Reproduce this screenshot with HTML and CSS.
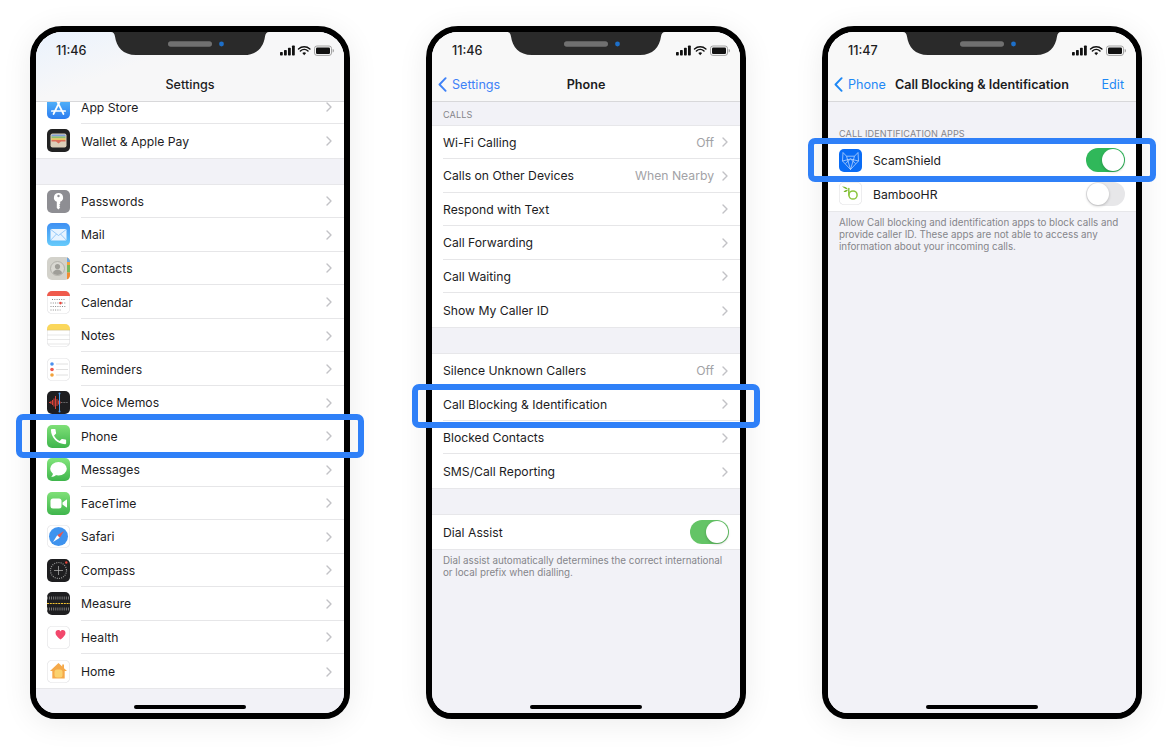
FILE: index.html
```html
<!DOCTYPE html>
<html lang="en">
<head>
<meta charset="utf-8">
<title>Call blocking setup</title>
<link rel="stylesheet" href="styles.css">
</head>
<body>
<svg class="symbols" aria-hidden="true">
  <symbol id="chev" viewBox="0 0 6 10"><path d="M1 1l4 4-4 4" fill="none" stroke="currentColor" stroke-width="1.4" stroke-linecap="round" stroke-linejoin="round"/></symbol>
  <symbol id="back" viewBox="0 0 9 15"><path d="M7.6 1.2L1.5 7.5l6.1 6.3" fill="none" stroke="currentColor" stroke-width="1.9" stroke-linecap="round" stroke-linejoin="round"/></symbol>
  <symbol id="notch" viewBox="0 0 158 23"><path d="M0 0h158c-2.5 0-3.4 1.6-4 4.5C152.600 15 146 23 133 23H25C12 23 5.400 15 4 4.500 3.400 1.600 2.500 0 0 0z" fill="#2a2a2a"/><rect x="57" y="9.300" width="44" height="5.400" rx="2.700" fill="#707070"/><circle cx="110.500" cy="12" r="2.400" fill="#1d6fc9"/></symbol>
  <symbol id="status" viewBox="0 0 54 11">
    <rect x="0" y="7" width="2.800" height="3.500" rx=".7" fill="#111"/><rect x="4" y="5" width="2.800" height="5.500" rx=".7" fill="#111"/><rect x="8" y="2.800" width="2.800" height="7.700" rx=".7" fill="#111"/><rect x="12" y=".5" width="2.800" height="10" rx=".7" fill="#111"/>
    <path d="M18.500 4a8.600 8.600 0 0 1 11.400 0M20.400 6a5.700 5.700 0 0 1 7.600 0" fill="none" stroke="#111" stroke-width="1.500" stroke-linecap="round"/><path d="M22.300 8l1.900 2.200L26.100 8a3 3 0 0 0-3.800 0z" fill="#111"/>
    <rect x="34.500" y="1" width="17" height="9.400" rx="2.400" fill="none" stroke="#9a9a9a" stroke-width=".9"/><rect x="36" y="2.400" width="14" height="6.600" rx="1.300" fill="#111"/><path d="M52.700 4v3.400c.8-.2 1.200-.9 1.200-1.700s-.4-1.500-1.200-1.700z" fill="#9a9a9a"/>
  </symbol>
</svg>

<main class="stage">

  <section class="phone">
    <svg class="notch"><use href="#notch"/></svg>
    <div class="screen">
      <header class="bar bar-tinted">
        <div class="status"><span class="time">11:46</span><svg class="status-icons"><use href="#status"/></svg></div>
        <div class="nav"><span></span><span class="nav-title nav-title-medium">Settings</span><span></span></div>
      </header>
      <div class="content content-scrolled">
        <div class="group">
          <div class="row"><span class="icon icon-appstore"><svg viewBox="0 0 23 23"><path d="M13.500 4L6.500 18M9.500 4l7 14M4.800 15h13.400" fill="none" stroke="#fff" stroke-width="1.700" stroke-linecap="round"/></svg></span><div class="row-body"><span>App Store</span><svg class="chev"><use href="#chev"/></svg></div></div>
          <div class="row"><span class="icon icon-wallet"><svg viewBox="0 0 23 23"><rect x="3.500" y="4.500" width="16" height="14" rx="2" fill="#dccfb8"/><rect x="4.500" y="5.500" width="14" height="2" fill="#7f9fd8"/><rect x="4.500" y="7.500" width="14" height="1.800" fill="#8cc06f"/><rect x="4.500" y="9.300" width="14" height="1.800" fill="#e8c45f"/><path d="M4.500 11.100h14v1.500h-4.500l-2.500 2-2.500-2H4.500z" fill="#dc6f5a"/></svg></span><div class="row-body"><span>Wallet &amp; Apple Pay</span><svg class="chev"><use href="#chev"/></svg></div></div>
        </div>
        <div class="group group-gap">
          <div class="row"><span class="icon icon-passwords"><svg viewBox="0 0 23 23"><path fill-rule="evenodd" d="M11.500 3a4.500 4.500 0 0 1 1.700 8.700v2l-1 1 1 1-1 1 1 .9-1.700 1.900-1.700-1.500v-6.300A4.500 4.500 0 0 1 11.500 3zm0 1.800a1.200 1.200 0 1 0 0 2.400 1.200 1.200 0 0 0 0-2.400z" fill="#fff"/></svg></span><div class="row-body"><span>Passwords</span><svg class="chev"><use href="#chev"/></svg></div></div>
          <div class="row"><span class="icon icon-mail"><svg viewBox="0 0 23 23"><rect x="3.500" y="6" width="16" height="11.500" rx="1.200" fill="#e8f4ff"/><path d="M3.800 6.500l7.700 6 7.700-6M3.800 17l5.700-6M19.200 17l-5.700-6" fill="none" stroke="#72b8f5" stroke-width=".7"/></svg></span><div class="row-body"><span>Mail</span><svg class="chev"><use href="#chev"/></svg></div></div>
          <div class="row"><span class="icon icon-contacts"><svg viewBox="0 0 23 23"><rect x="20" y="0" width="3" height="8" fill="#f0a33a"/><rect x="20" y="8" width="3" height="7.500" fill="#77b85c"/><rect x="20" y="15.500" width="3" height="7.500" fill="#f28a30"/><rect x="20" y="0" width="3" height="5" fill="#6aa6e8"/><circle cx="10.500" cy="11.500" r="7" fill="#d9d8d2" stroke="#a9a8a2" stroke-width=".8"/><circle cx="10.500" cy="9.500" r="2.600" fill="#9f9e98"/><path d="M5.800 16.200c.8-2.500 2.600-3.700 4.700-3.700s3.900 1.200 4.700 3.700a7 7 0 0 1-9.400 0z" fill="#9f9e98"/></svg></span><div class="row-body"><span>Contacts</span><svg class="chev"><use href="#chev"/></svg></div></div>
          <div class="row"><span class="icon icon-white"><svg viewBox="0 0 23 23"><rect width="23" height="5" fill="#ef5a4c"/><path d="M5 8.500h13M3.500 12h16M3.500 15.500h16M3.500 19h10" stroke="#8a8a8a" stroke-width="1" stroke-dasharray="1 1.300"/><rect x="12.200" y="10.800" width="2.600" height="2.600" rx="1.300" fill="#e8453a"/></svg></span><div class="row-body"><span>Calendar</span><svg class="chev"><use href="#chev"/></svg></div></div>
          <div class="row"><span class="icon icon-white"><svg viewBox="0 0 23 23"><rect width="23" height="6" fill="#fbd75b"/><path d="M0 6.200h23" stroke="#c9b777" stroke-width=".5"/><path d="M0 11h23M0 15.500h23M0 20h23" stroke="#dcdcdc" stroke-width=".7"/></svg></span><div class="row-body"><span>Notes</span><svg class="chev"><use href="#chev"/></svg></div></div>
          <div class="row"><span class="icon icon-white"><svg viewBox="0 0 23 23"><circle cx="5" cy="6" r="1.800" fill="#4a90ee"/><circle cx="5" cy="11.500" r="1.800" fill="#ee5a50"/><circle cx="5" cy="17" r="1.800" fill="#f2a33c"/><path d="M9 6h12M9 11.500h12M9 17h12" stroke="#d8d8d8" stroke-width=".8"/></svg></span><div class="row-body"><span>Reminders</span><svg class="chev"><use href="#chev"/></svg></div></div>
          <div class="row"><span class="icon icon-dark"><svg viewBox="0 0 23 23"><path d="M2 11.500h2M4 10v3M5.500 9v5M7 7.500v8M8.500 5v13M10 8v7M11.500 9.500v4M13 10.500v2" stroke="#d8423a" stroke-width="1"/><path d="M14 11.500h7" stroke="#aaa" stroke-width=".6" stroke-dasharray="1 .6"/><path d="M12.500 2v19" stroke="#4a9bef" stroke-width="1"/><circle cx="12.500" cy="2.500" r="1" fill="#4a9bef"/><circle cx="12.500" cy="20.500" r="1" fill="#4a9bef"/></svg></span><div class="row-body"><span>Voice Memos</span><svg class="chev"><use href="#chev"/></svg></div></div>
          <div class="row"><span class="icon icon-phone"><svg viewBox="0 0 24 24"><path transform="translate(1.500 1.500) scale(.88)" d="M6.620 10.790c1.440 2.830 3.760 5.140 6.590 6.590l2.200-2.200c.27-.27.67-.36 1.020-.24 1.120.37 2.330.57 3.570.57.550 0 1 .45 1 1V20c0 .55-.45 1-1 1-9.390 0-17-7.610-17-17 0-.55.45-1 1-1h3.500c.55 0 1 .45 1 1 0 1.250.2 2.450.57 3.570.11.350.03.740-.25 1.020l-2.200 2.200z" fill="#fff"/></svg></span><div class="row-body"><span>Phone</span><svg class="chev"><use href="#chev"/></svg></div></div>
          <div class="row"><span class="icon icon-messages"><svg viewBox="0 0 23 23"><ellipse cx="11.500" cy="10.800" rx="8.300" ry="6.800" fill="#fff"/><path d="M6 15c0 1.800-.8 3-1.800 3.800 2 .1 4-.6 5.300-2z" fill="#fff"/></svg></span><div class="row-body"><span>Messages</span><svg class="chev"><use href="#chev"/></svg></div></div>
          <div class="row"><span class="icon icon-facetime"><svg viewBox="0 0 23 23"><rect x="3.500" y="6.500" width="11" height="10" rx="2.500" fill="#fff"/><path d="M15.500 10.500l3.700-2.800c.4-.3.8 0 .8.400v6.800c0 .5-.4.7-.8.400l-3.700-2.800z" fill="#fff"/></svg></span><div class="row-body"><span>FaceTime</span><svg class="chev"><use href="#chev"/></svg></div></div>
          <div class="row"><span class="icon icon-safari"><svg viewBox="0 0 23 23"><circle cx="11.500" cy="11.500" r="9.500" fill="#3f93ee"/><path d="M17 6l-6.800 4.200 2.600 2.600z" fill="#e9574c"/><path d="M6 17l4.200-6.800 2.600 2.600z" fill="#fff"/></svg></span><div class="row-body"><span>Safari</span><svg class="chev"><use href="#chev"/></svg></div></div>
          <div class="row"><span class="icon icon-dark"><svg viewBox="0 0 23 23"><circle cx="11.500" cy="11.500" r="8" fill="none" stroke="#9a9a9a" stroke-width="1.200" stroke-dasharray="1 1.200"/><path d="M11.500 7v9M7 11.500h9" stroke="#bbb" stroke-width=".7"/><circle cx="19.300" cy="3.500" r="1.200" fill="#e8453a"/></svg></span><div class="row-body"><span>Compass</span><svg class="chev"><use href="#chev"/></svg></div></div>
          <div class="row"><span class="icon icon-dark"><svg viewBox="0 0 23 23"><path d="M0 6h23M0 17h23" stroke="#8d8d8d" stroke-width="3" stroke-dasharray=".8 1.300"/><path d="M0 11.500h23" stroke="#f2c230" stroke-width="1" stroke-dasharray="2 .8"/></svg></span><div class="row-body"><span>Measure</span><svg class="chev"><use href="#chev"/></svg></div></div>
          <div class="row"><span class="icon icon-white"><svg viewBox="0 0 23 23"><path d="M13.500 13.500C10.800 11.400 8.500 9.300 8.500 7c0-1.700 1.200-2.900 2.700-2.900 1 0 1.800.5 2.300 1.300.5-.8 1.300-1.300 2.300-1.300 1.500 0 2.700 1.200 2.700 2.900 0 2.300-2.300 4.400-5 6.500z" fill="#f2486c"/></svg></span><div class="row-body"><span>Health</span><svg class="chev"><use href="#chev"/></svg></div></div>
          <div class="row"><span class="icon icon-white"><svg viewBox="0 0 23 23"><path d="M11.500 3L3 11h2.300v7.500h12.400V11H20l-3-2.800V4.500h-1.800v2z" fill="#f5a94a"/><rect x="7.500" y="9.500" width="8" height="8" rx="2.500" fill="#fbd26f"/></svg></span><div class="row-body"><span>Home</span><svg class="chev"><use href="#chev"/></svg></div></div>
        </div>
      </div>
    </div>
    <div class="home-indicator"></div>
    <div class="highlight highlight-phone"></div>
  </section>

  <section class="phone">
    <svg class="notch"><use href="#notch"/></svg>
    <div class="screen">
      <header class="bar">
        <div class="status"><span class="time">11:46</span><svg class="status-icons"><use href="#status"/></svg></div>
        <div class="nav"><span class="back"><svg class="back-chev"><use href="#back"/></svg>Settings</span><span class="nav-title">Phone</span><span></span></div>
      </header>
      <div class="content">
        <div class="section-head section-head-tight">CALLS</div>
        <div class="group">
          <div class="row row-plain"><div class="row-body"><span>Wi-Fi Calling</span><span class="row-end"><span class="value">Off</span><svg class="chev"><use href="#chev"/></svg></span></div></div>
          <div class="row row-plain"><div class="row-body"><span>Calls on Other Devices</span><span class="row-end"><span class="value">When Nearby</span><svg class="chev"><use href="#chev"/></svg></span></div></div>
          <div class="row row-plain"><div class="row-body"><span>Respond with Text</span><svg class="chev"><use href="#chev"/></svg></div></div>
          <div class="row row-plain"><div class="row-body"><span>Call Forwarding</span><svg class="chev"><use href="#chev"/></svg></div></div>
          <div class="row row-plain"><div class="row-body"><span>Call Waiting</span><svg class="chev"><use href="#chev"/></svg></div></div>
          <div class="row row-plain"><div class="row-body"><span>Show My Caller ID</span><svg class="chev"><use href="#chev"/></svg></div></div>
        </div>
        <div class="group group-gap">
          <div class="row row-plain"><div class="row-body"><span>Silence Unknown Callers</span><span class="row-end"><span class="value">Off</span><svg class="chev"><use href="#chev"/></svg></span></div></div>
          <div class="row row-plain"><div class="row-body"><span>Call Blocking &amp; Identification</span><svg class="chev"><use href="#chev"/></svg></div></div>
          <div class="row row-plain"><div class="row-body"><span>Blocked Contacts</span><svg class="chev"><use href="#chev"/></svg></div></div>
          <div class="row row-plain"><div class="row-body"><span>SMS/Call Reporting</span><svg class="chev"><use href="#chev"/></svg></div></div>
        </div>
        <div class="group group-gap">
          <div class="row row-plain"><div class="row-body row-body-toggle"><span>Dial Assist</span><span class="toggle toggle-soft"></span></div></div>
        </div>
        <p class="note">Dial assist automatically determines the correct international or local prefix when dialling.</p>
      </div>
    </div>
    <div class="home-indicator"></div>
    <div class="highlight highlight-blocking"></div>
  </section>

  <section class="phone">
    <svg class="notch"><use href="#notch"/></svg>
    <div class="screen">
      <header class="bar">
        <div class="status"><span class="time">11:47</span><svg class="status-icons"><use href="#status"/></svg></div>
        <div class="nav"><span class="back back-tight"><svg class="back-chev"><use href="#back"/></svg>Phone</span><span class="nav-title">Call Blocking &amp; Identification</span><span class="edit">Edit</span></div>
      </header>
      <div class="content">
        <div class="section-head">CALL IDENTIFICATION APPS</div>
        <div class="group">
          <div class="row"><span class="icon icon-scam"><svg viewBox="0 0 23 23"><path d="M4 3.500l3.500 3.700h8L19 3.500l.5 8.500-8 8.500-8-8.500zM7.500 7.200l4 13.300 4-13.300M3.500 12l8-2 8 2M6.500 14.500l5-4.500 5 4.500" fill="none" stroke="#cfe2ff" stroke-width=".7" stroke-linejoin="round"/></svg></span><div class="row-body row-body-toggle"><span>ScamShield</span><span class="toggle toggle-on"></span></div></div>
          <div class="row"><span class="icon icon-white"><svg viewBox="0 0 23 23"><path d="M9.800 6.500v6.500" fill="none" stroke="#8cc63f" stroke-width="1.500" stroke-linecap="round"/><circle cx="14" cy="13" r="4.100" fill="none" stroke="#8cc63f" stroke-width="1.500"/><path d="M9 7.500C7.500 7.300 5.500 6.500 3 4.500c2.800-.2 5 .7 6 3zM8.800 8.200c-1.500-.3-3.200.1-4.300 1.500 1.800.6 3.500.1 4.300-1.500z" fill="#7cb82f"/></svg></span><div class="row-body row-body-toggle"><span>BambooHR</span><span class="toggle"></span></div></div>
        </div>
        <p class="note">Allow Call blocking and identification apps to block calls and provide caller ID. These apps are not able to access any information about your incoming calls.</p>
      </div>
    </div>
    <div class="home-indicator"></div>
    <div class="highlight highlight-scam"></div>
  </section>

</main>
</body>
</html>
```

FILE: styles.css
```css
* { box-sizing: border-box; }

html, body { margin: 0; height: 100%; background: #fff; }

body {
  font-family: Inter, "Liberation Sans", sans-serif;
  color: #1c1c1e;
  overflow: hidden;
}

.symbols { display: none; }

.stage {
  display: flex;
  gap: 76px;
  padding: 26px 30px;
}

.phone {
  position: relative;
  flex: none;
  width: 320px;
  height: 693px;
  border: 6px solid #000;
  border-radius: 32px 32px 26px 26px;
  box-shadow: 0 4px 30px rgba(0, 0, 0, .08);
  background: #f2f2f7;
}

.screen {
  height: 100%;
  border-radius: 26px 26px 20px 20px;
  overflow: hidden;
  background: #f2f2f7;
  font-size: 12.2px;
}

.notch {
  position: absolute;
  z-index: 3;
  top: 0;
  left: 75px;
  width: 158px;
  height: 23px;
}

.bar {
  position: relative;
  z-index: 2;
  height: 70px;
  background: #f8f8f8;
  border-bottom: 1px solid #d8d8da;
}

.bar-tinted { background: linear-gradient(160deg, #eaf2fd 0%, #f7f7f8 38%, #f7f7f8 100%); }

.status {
  display: flex;
  align-items: center;
  justify-content: space-between;
  height: 36px;
  padding: 0 10px 0 20px;
}

.time { font-size: 12.6px; font-weight: 500; }

.status-icons { width: 54px; height: 11px; }

.nav {
  display: grid;
  grid-template-columns: 1fr auto 1fr;
  align-items: center;
  height: 33px;
  font-size: 12.6px;
}

.nav-title { font-weight: 600; }
.nav-title-medium { font-weight: 500; }

.back {
  display: flex;
  align-items: center;
  gap: 5px;
  padding-left: 6px;
  color: #3f82f7;
}

.back-tight { color: #1e88f5; }

.back-chev { width: 9px; height: 15px; }

.edit {
  padding-right: 12px;
  text-align: right;
  color: #1e88f5;
}

.content-scrolled { margin-top: -11.5px; }

.section-head {
  display: flex;
  align-items: flex-end;
  height: 41.5px;
  padding: 0 11px 5px;
  font-size: 9.1px;
  letter-spacing: .1px;
  color: #85858a;
}

.section-head-tight {
  height: 23.5px;
  padding-bottom: 6px;
}

.group {
  background: #fff;
  box-shadow: 0 -.5px 0 #dcdcde, 0 .5px 0 #dcdcde;
}

.group-gap { margin-top: 27px; }

.row {
  display: flex;
  align-items: center;
  height: 33.55px;
  padding-left: 11px;
}

.row-body {
  flex: 1;
  min-width: 0;
  height: 100%;
  display: flex;
  align-items: center;
  justify-content: space-between;
  padding: 1px 12px 0 0;
  border-bottom: 1px solid #e6e6e8;
}

.row:last-child .row-body { border-bottom: 0; }

.row-body-toggle { padding-right: 11px; }

.row-end {
  display: flex;
  align-items: center;
  gap: 8px;
}

.value { color: #a2a2a6; }

.chev {
  flex: none;
  width: 6px;
  height: 10px;
  color: #c2c2c6;
}

.icon {
  flex: none;
  display: block;
  width: 23px;
  height: 23px;
  margin-right: 11px;
  border-radius: 5px;
  overflow: hidden;
}

.icon svg { display: block; width: 100%; height: 100%; }

.icon-white { background: #fff; box-shadow: inset 0 0 0 .6px #e2e2e4; }
.icon-dark { background: #1e1e20; }
.icon-appstore { background: linear-gradient(#5cc0fb, #2b7cf0); }
.icon-wallet { background: #222; }
.icon-passwords { background: #8e8e93; }
.icon-mail { background: linear-gradient(#3f90f3, #66cbfb); }
.icon-contacts { background: #d3d2cb; }
.icon-phone { background: linear-gradient(#7fe078, #3fb54c); }
.icon-messages { background: linear-gradient(#82e57b, #3fb54c); }
.icon-facetime { background: linear-gradient(#7fe078, #3fb54c); }
.icon-safari { background: #fff; box-shadow: inset 0 0 0 .6px #e2e2e4; }
.icon-scam { background: #0a6cf5; }

.toggle {
  position: relative;
  flex: none;
  display: block;
  width: 39px;
  height: 24px;
  border-radius: 12px;
  background: #e7e7e9;
}

.toggle::after {
  content: "";
  position: absolute;
  top: 1px;
  left: 1px;
  width: 22px;
  height: 22px;
  border-radius: 50%;
  background: #fff;
  box-shadow: 0 1px 3px rgba(0, 0, 0, .22);
}

.toggle-on { background: #30b85a; }
.toggle-soft { background: #64c466; }
.toggle-on::after, .toggle-soft::after { left: 16px; }

.note {
  margin: 0;
  padding: 6.5px 11px 0;
  font-size: 9.8px;
  line-height: 12px;
  color: #85858a;
}

.home-indicator {
  position: absolute;
  z-index: 3;
  left: 98px;
  bottom: 4px;
  width: 112px;
  height: 4px;
  border-radius: 2px;
  background: #000;
}

.highlight {
  position: absolute;
  z-index: 4;
  left: -20px;
  width: 348px;
  height: 44px;
  border: 6px solid #2f80f8;
  border-radius: 7px;
}

.highlight-phone { top: 382px; }
.highlight-blocking { top: 352px; }
.highlight-scam { top: 106px; }
```
